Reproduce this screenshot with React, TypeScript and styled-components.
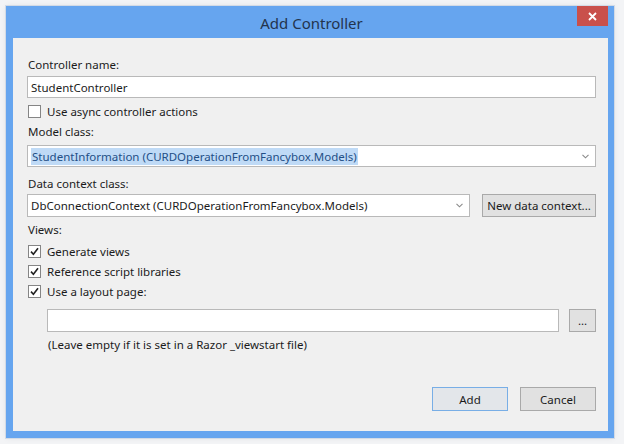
import React from 'react';
import styled, { createGlobalStyle } from 'styled-components';

const GlobalStyle = createGlobalStyle`
  html, body {
    margin: 0;
    padding: 0;
    background: #f3f4f6;
  }
  body {
    font-family: "Noto Sans", "Open Sans", sans-serif;
    font-size: 11.5px;
    color: #1b1b1b;
  }
`;

const SPage = styled.div`
  width: 624px;
  height: 444px;
  padding: 6px 0 0 6px;
  box-sizing: border-box;
`;

const SWindow = styled.div`
  width: 608px;
  height: 432px;
  box-sizing: border-box;
  background: #66a5ef;
  padding: 0 6px 7px 7px;
  display: flex;
  flex-direction: column;
  box-shadow: 0 0 0 1px #d3dbe6, 0 0 6px rgba(0, 0, 0, 0.08);
`;

const STitleBar = styled.div`
  height: 32px;
  position: relative;
  display: flex;
  align-items: center;
  justify-content: center;
`;

const STitle = styled.span`
  font-family: "Noto Sans", sans-serif;
  font-size: 15px;
  color: #23344d;
  margin-left: 2px;
  margin-top: 1px;
`;

const SCloseButton = styled.div`
  position: absolute;
  top: 0;
  right: 0;
  width: 31px;
  height: 20px;
  background: #c9504b;
  display: flex;
  align-items: center;
  justify-content: center;
`;

const SContent = styled.div`
  flex: 1;
  background: #f0f0f0;
  padding: 0 12px 0 14px;
  display: flex;
  flex-direction: column;
`;

const SLabel = styled.div<{ $mt: number; $indent?: number }>`
  margin-top: ${({ $mt }) => $mt}px;
  margin-left: ${({ $indent }) => $indent ?? 1}px;
  height: 16px;
  line-height: 16px;
  white-space: nowrap;
`;

const STextBox = styled.div<{ $mt: number; $height: number }>`
  margin-top: ${({ $mt }) => $mt}px;
  height: ${({ $height }) => $height}px;
  box-sizing: border-box;
  flex: 1;
  background: #fff;
  border: 1px solid #b9b9b9;
  display: flex;
  align-items: center;
  padding: 0 3px;
  white-space: nowrap;
`;

const SCombo = styled(STextBox)`
  justify-content: space-between;
  padding-right: 6px;
`;

const SSelected = styled.span`
  background: #bfdaf6;
  color: #234f86;
  padding: 1px 1px;
`;

const SRow = styled.div<{ $mt: number; $indent?: number; $gap: number }>`
  margin-top: ${({ $mt }) => $mt}px;
  margin-left: ${({ $indent }) => $indent ?? 0}px;
  display: flex;
  gap: ${({ $gap }) => $gap}px;
  align-items: stretch;
`;

const SCheckRow = styled.label<{ $mt: number; $height: number }>`
  margin-top: ${({ $mt }) => $mt}px;
  height: ${({ $height }) => $height}px;
  display: flex;
  align-items: center;
  gap: 6px;
  white-space: nowrap;
`;

const SCheckBox = styled.span`
  width: 13px;
  height: 13px;
  box-sizing: border-box;
  background: #fff;
  border: 1px solid #858585;
  display: flex;
  align-items: center;
  justify-content: center;
  margin-left: 1px;
`;

const SButton = styled.div<{ $width: number; $default?: boolean }>`
  width: ${({ $width }) => $width}px;
  box-sizing: border-box;
  background: ${({ $default }) => ($default ? '#e3e6ea' : '#e1e1e1')};
  border: 1px solid ${({ $default }) => ($default ? '#78aee6' : '#a9a9a9')};
  display: flex;
  align-items: center;
  justify-content: center;
  white-space: nowrap;
`;

const SFooter = styled.div`
  margin-top: 34px;
  height: 24px;
  display: flex;
  justify-content: flex-end;
  gap: 12px;
`;

const Chevron = () => (
  <svg width="7" height="5" viewBox="0 0 7 5">
    <path d="M0.5 0.8 L3.5 3.8 L6.5 0.8" fill="none" stroke="#8a8a8a" strokeWidth="1.1" />
  </svg>
);

const Check = () => (
  <svg width="9" height="9" viewBox="0 0 9 9">
    <path d="M1 4.6 L3.4 7.2 L8 1.2" fill="none" stroke="#222" strokeWidth="1.6" />
  </svg>
);

const CheckItem = ({ label, checked, mt, height }: { label: string; checked?: boolean; mt: number; height: number }) => (
  <SCheckRow $mt={mt} $height={height}>
    <SCheckBox>{checked && <Check />}</SCheckBox>
    <span>{label}</span>
  </SCheckRow>
);

export default function App() {
  return (
    <>
      <GlobalStyle />
      <SPage>
        <SWindow>
          <STitleBar>
            <STitle>Add Controller</STitle>
            <SCloseButton>
              <svg width="9" height="9" viewBox="0 0 9 9">
                <path d="M1 1 L8 8 M8 1 L1 8" stroke="#fff" strokeWidth="1.8" />
              </svg>
            </SCloseButton>
          </STitleBar>
          <SContent>
            <SLabel $mt={19}>Controller name:</SLabel>
            <SRow $mt={3} $gap={0}>
              <STextBox $mt={0} $height={22}>StudentController</STextBox>
            </SRow>
            <CheckItem label="Use async controller actions" mt={5} height={16} />

            <SLabel $mt={5}>Model class:</SLabel>
            <SRow $mt={5} $gap={0}>
              <SCombo $mt={0} $height={22}>
                <SSelected>StudentInformation (CURDOperationFromFancybox.Models)</SSelected>
                <Chevron />
              </SCombo>
            </SRow>

            <SLabel $mt={9}>Data context class:</SLabel>
            <SRow $mt={2} $gap={12}>
              <SCombo $mt={0} $height={23}>
                <span>DbConnectionContext (CURDOperationFromFancybox.Models)</span>
                <Chevron />
              </SCombo>
              <SButton $width={114}>New data context...</SButton>
            </SRow>

            <SLabel $mt={5}>Views:</SLabel>
            <CheckItem label="Generate views" checked mt={3} height={20} />
            <CheckItem label="Reference script libraries" checked mt={0} height={20} />
            <CheckItem label="Use a layout page:" checked mt={0} height={20} />

            <SRow $mt={8} $indent={20} $gap={10}>
              <STextBox $mt={0} $height={23} />
              <SButton $width={27}>...</SButton>
            </SRow>
            <SLabel $mt={5} $indent={21}>(Leave empty if it is set in a Razor _viewstart file)</SLabel>

            <SFooter>
              <SButton $width={76} $default>Add</SButton>
              <SButton $width={76}>Cancel</SButton>
            </SFooter>
          </SContent>
        </SWindow>
      </SPage>
    </>
  );
}
